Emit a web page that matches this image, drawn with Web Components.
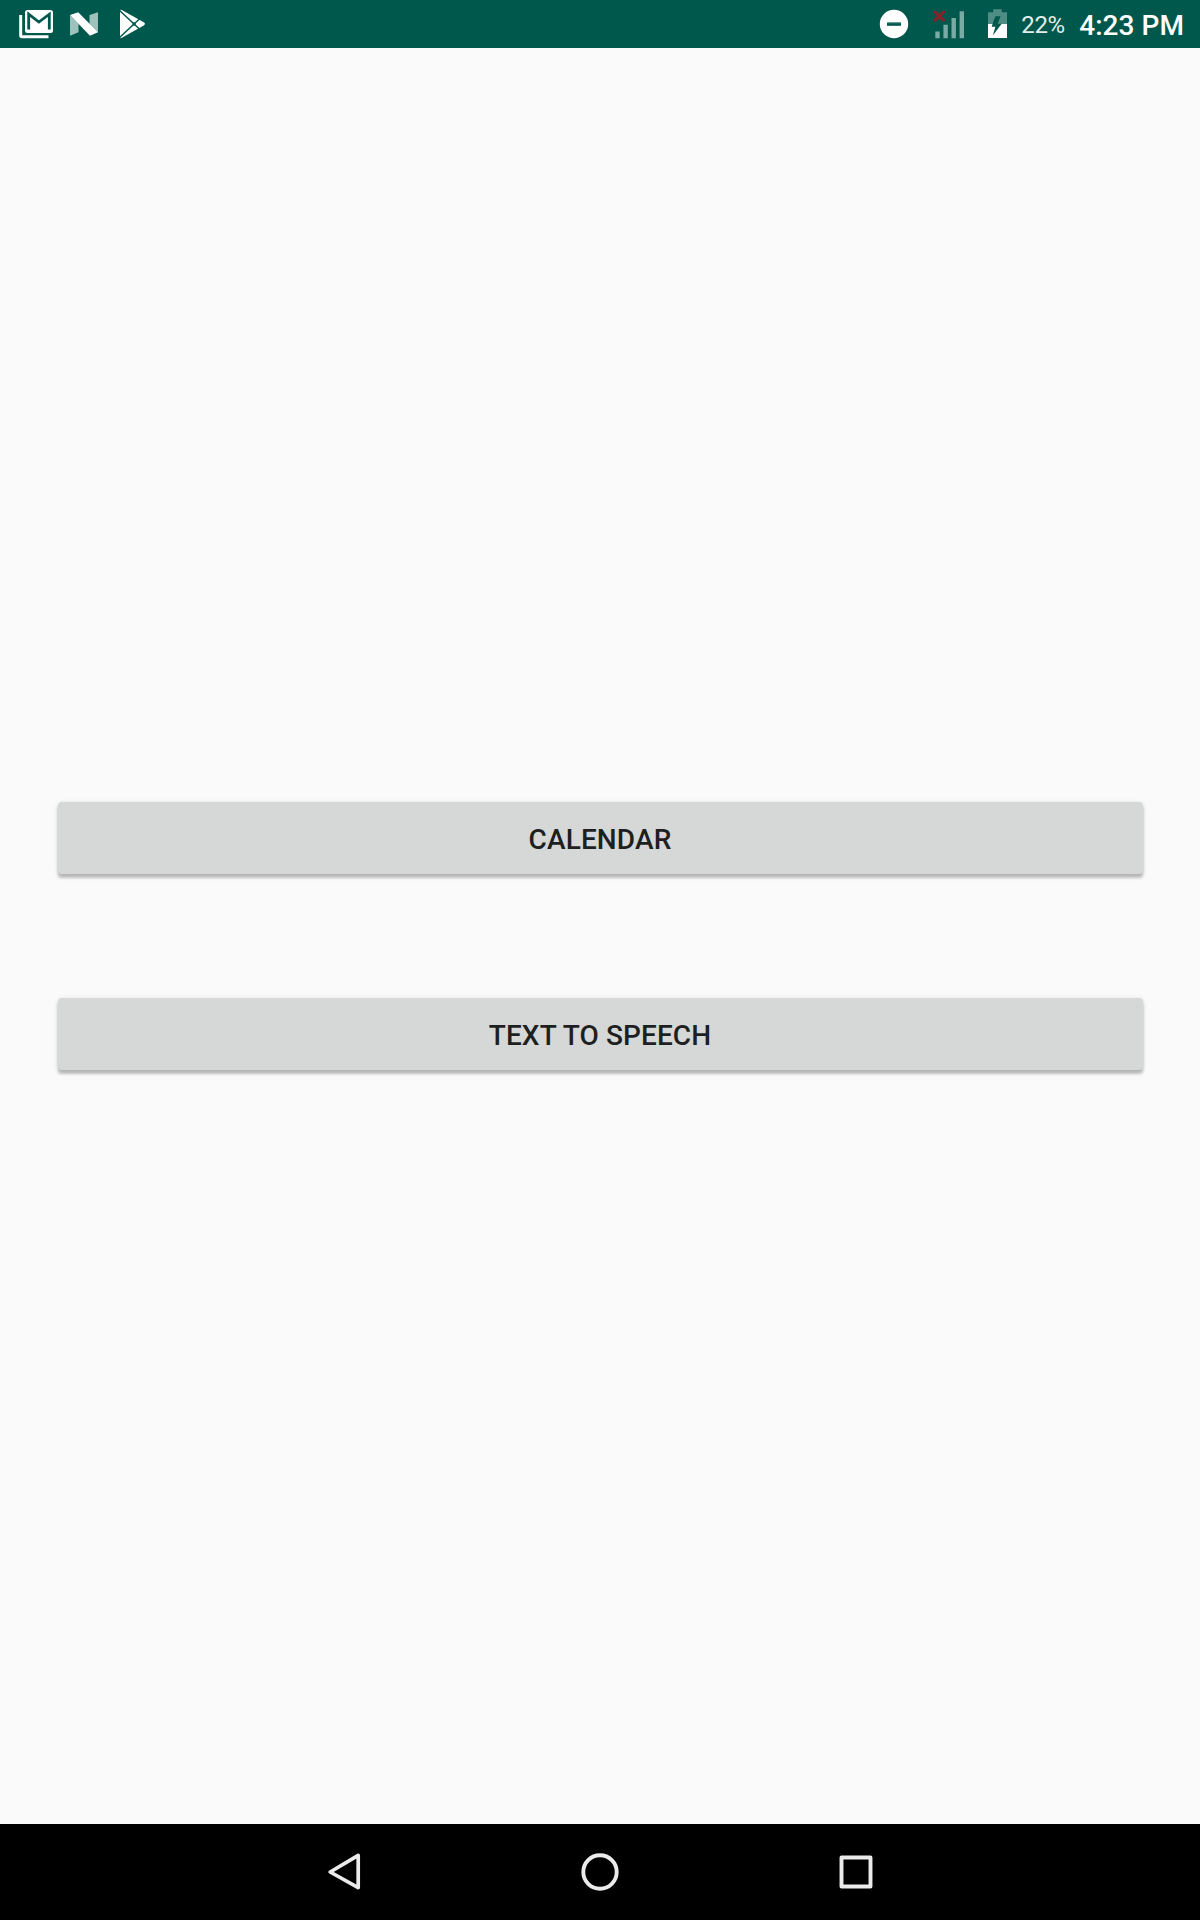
<!DOCTYPE html>
<html lang="en">
<head>
<meta charset="utf-8">
<title>Main menu</title>
<style>
html, body { margin: 0; height: 100%; }
body { font-family: Roboto, "Noto Sans", sans-serif; background: #fafafa; }
</style>
</head>
<body>
<tablet-screen>
  <status-bar slot="status" battery="22%" time="4:23 PM"></status-bar>
  <raised-button>CALENDAR</raised-button>
  <raised-button>TEXT TO SPEECH</raised-button>
  <nav-bar slot="nav"></nav-bar>
</tablet-screen>
<script>
class TabletScreen extends HTMLElement {
  constructor() {
    super();
    this.attachShadow({ mode: 'open' }).innerHTML = `
      <style>
        :host { display: flex; flex-direction: column; width: 1200px; height: 1920px; background: #fafafa; overflow: hidden; }
        main { flex: 1; display: flex; flex-direction: column; gap: 124px; padding: 754px 57.5px 0; }
      </style>
      <slot name="status"></slot><main><slot></slot></main><slot name="nav"></slot>`;
  }
}
customElements.define('tablet-screen', TabletScreen);

class RaisedButton extends HTMLElement {
  constructor() {
    super();
    this.attachShadow({ mode: 'open' }).innerHTML = `
      <style>
        :host { display: block; height: 72px; }
        button { display: flex; align-items: center; justify-content: center; width: 100%; height: 72px; border: 0; border-radius: 4px; padding: 3px 0 0; margin: 0;
          background: #d6d8d7; color: #1e1f1f; font: 500 28px/33px Roboto, sans-serif; letter-spacing: .12px;
          box-shadow: 0 4px 3px -.5px rgba(0,0,0,.22), 0 1px 5px rgba(0,0,0,.13); }
      </style>
      <button><slot></slot></button>`;
  }
}
customElements.define('raised-button', RaisedButton);

class StatusBar extends HTMLElement {
  constructor() {
    super();
    this.attachShadow({ mode: 'open' }).innerHTML = `
      <style>
        :host { display: flex; justify-content: space-between; height: 48px; flex: none; background: #00574b; color: #fff; }
        svg { display: block; flex: none; }
        .info { display: flex; align-items: center; padding-right: 16px; }
        .battery { font-size: 24px; line-height: 28px; width: 44px; margin: 2px 0 0 13px; color: #e3eeec; white-space: nowrap; letter-spacing: -.3px; }
        .time { font-size: 28px; line-height: 33px; font-weight: 500; margin: 2px 0 0 14px; white-space: nowrap; letter-spacing: .05px; }
      </style>
      <svg width="160" height="48" viewBox="0 0 160 48">
        <path d="M20.7 15v20.5q0 1.2 1.2 1.2h26.6" fill="none" stroke="#fff" stroke-width="3"/>
        <rect x="25" y="10" width="28" height="23" rx="2.5" fill="#fff"/>
        <path d="M28.7 29.5V14.2l10.2 7.9 10.4-7.9v15.3" fill="none" stroke="#00574b" stroke-width="2.8"/>
        <path d="M70 15 78.5 23.5v8.8L70 35.7zM89.5 15 98 12.3v20L89.5 24z" fill="#9dc2bc"/>
        <path d="M70 15 78.2 12.3 98 32.3 90 35.7z" fill="#fff"/>
        <path d="M120 11q0-2 1.8-1L144.2 22.6q1.6 1.2 0 2.6L121.8 37.8q-1.8 1-1.8-1z" fill="#fff"/>
        <path d="M119.3 10.3 140.5 30M119.3 37.7 140.5 18" stroke="#00574b" stroke-width="1.5"/>
        <circle cx="134.1" cy="24" r="1.7" fill="#00574b"/>
      </svg>
      <div class="info">
        <svg width="132" height="48" viewBox="876 0 132 48">
          <circle cx="894" cy="24" r="14.2" fill="#fff"/>
          <path d="M887 22.3h14v3.5h-14z" fill="#00574b"/>
          <path d="M887 22.2h14v1h-14z" fill="#6da39b"/>
          <path d="M935.3 31.5h4.4v6.8h-4.4zM943.4 24.7h4.4v13.6h-4.4zM951.5 18h4.4v20.3h-4.4zM959.6 11.3h4.4v27h-4.4z" fill="#7aaaa3"/>
          <path d="M934 11 944.6 21.4M944.6 11 934 21.4" stroke="#8a2229" stroke-width="3"/>
          <path d="M988 12.2h5.2V9.3h8.6v2.9h5.2v12h-19z" fill="#4d8d84"/>
          <path d="M988 24h19v14h-19z" fill="#fff"/>
          <path d="M1000.6 16.3h-5.2L991.6 26.8h3.8l-2.6 8.7 8.9-11.7h-4.1z" fill="#00574b"/>
        </svg>
        <span class="battery"></span>
        <span class="time"></span>
      </div>`;
  }
  connectedCallback() {
    this.shadowRoot.querySelector('.battery').textContent = this.getAttribute('battery');
    this.shadowRoot.querySelector('.time').textContent = this.getAttribute('time');
  }
}
customElements.define('status-bar', StatusBar);

class NavBar extends HTMLElement {
  constructor() {
    super();
    this.attachShadow({ mode: 'open' }).innerHTML = `
      <style>
        :host { display: flex; justify-content: center; align-items: center; gap: 208px; height: 96px; flex: none; background: #000; }
        svg { display: block; fill: none; stroke: #ebebeb; stroke-linejoin: round; }
      </style>
      <svg width="48" height="48" viewBox="0 0 48 48"><path d="M38.2 7.4v32.2L10.2 24z" stroke-width="3.7"/></svg>
      <svg width="48" height="48" viewBox="0 0 48 48"><circle cx="24" cy="24" r="16.7" stroke-width="3.9"/></svg>
      <svg width="48" height="48" viewBox="0 0 48 48"><path d="M9.5 9.5h29v29h-29z" stroke-width="3.9"/></svg>`;
  }
}
customElements.define('nav-bar', NavBar);
</script>
</body>
</html>
